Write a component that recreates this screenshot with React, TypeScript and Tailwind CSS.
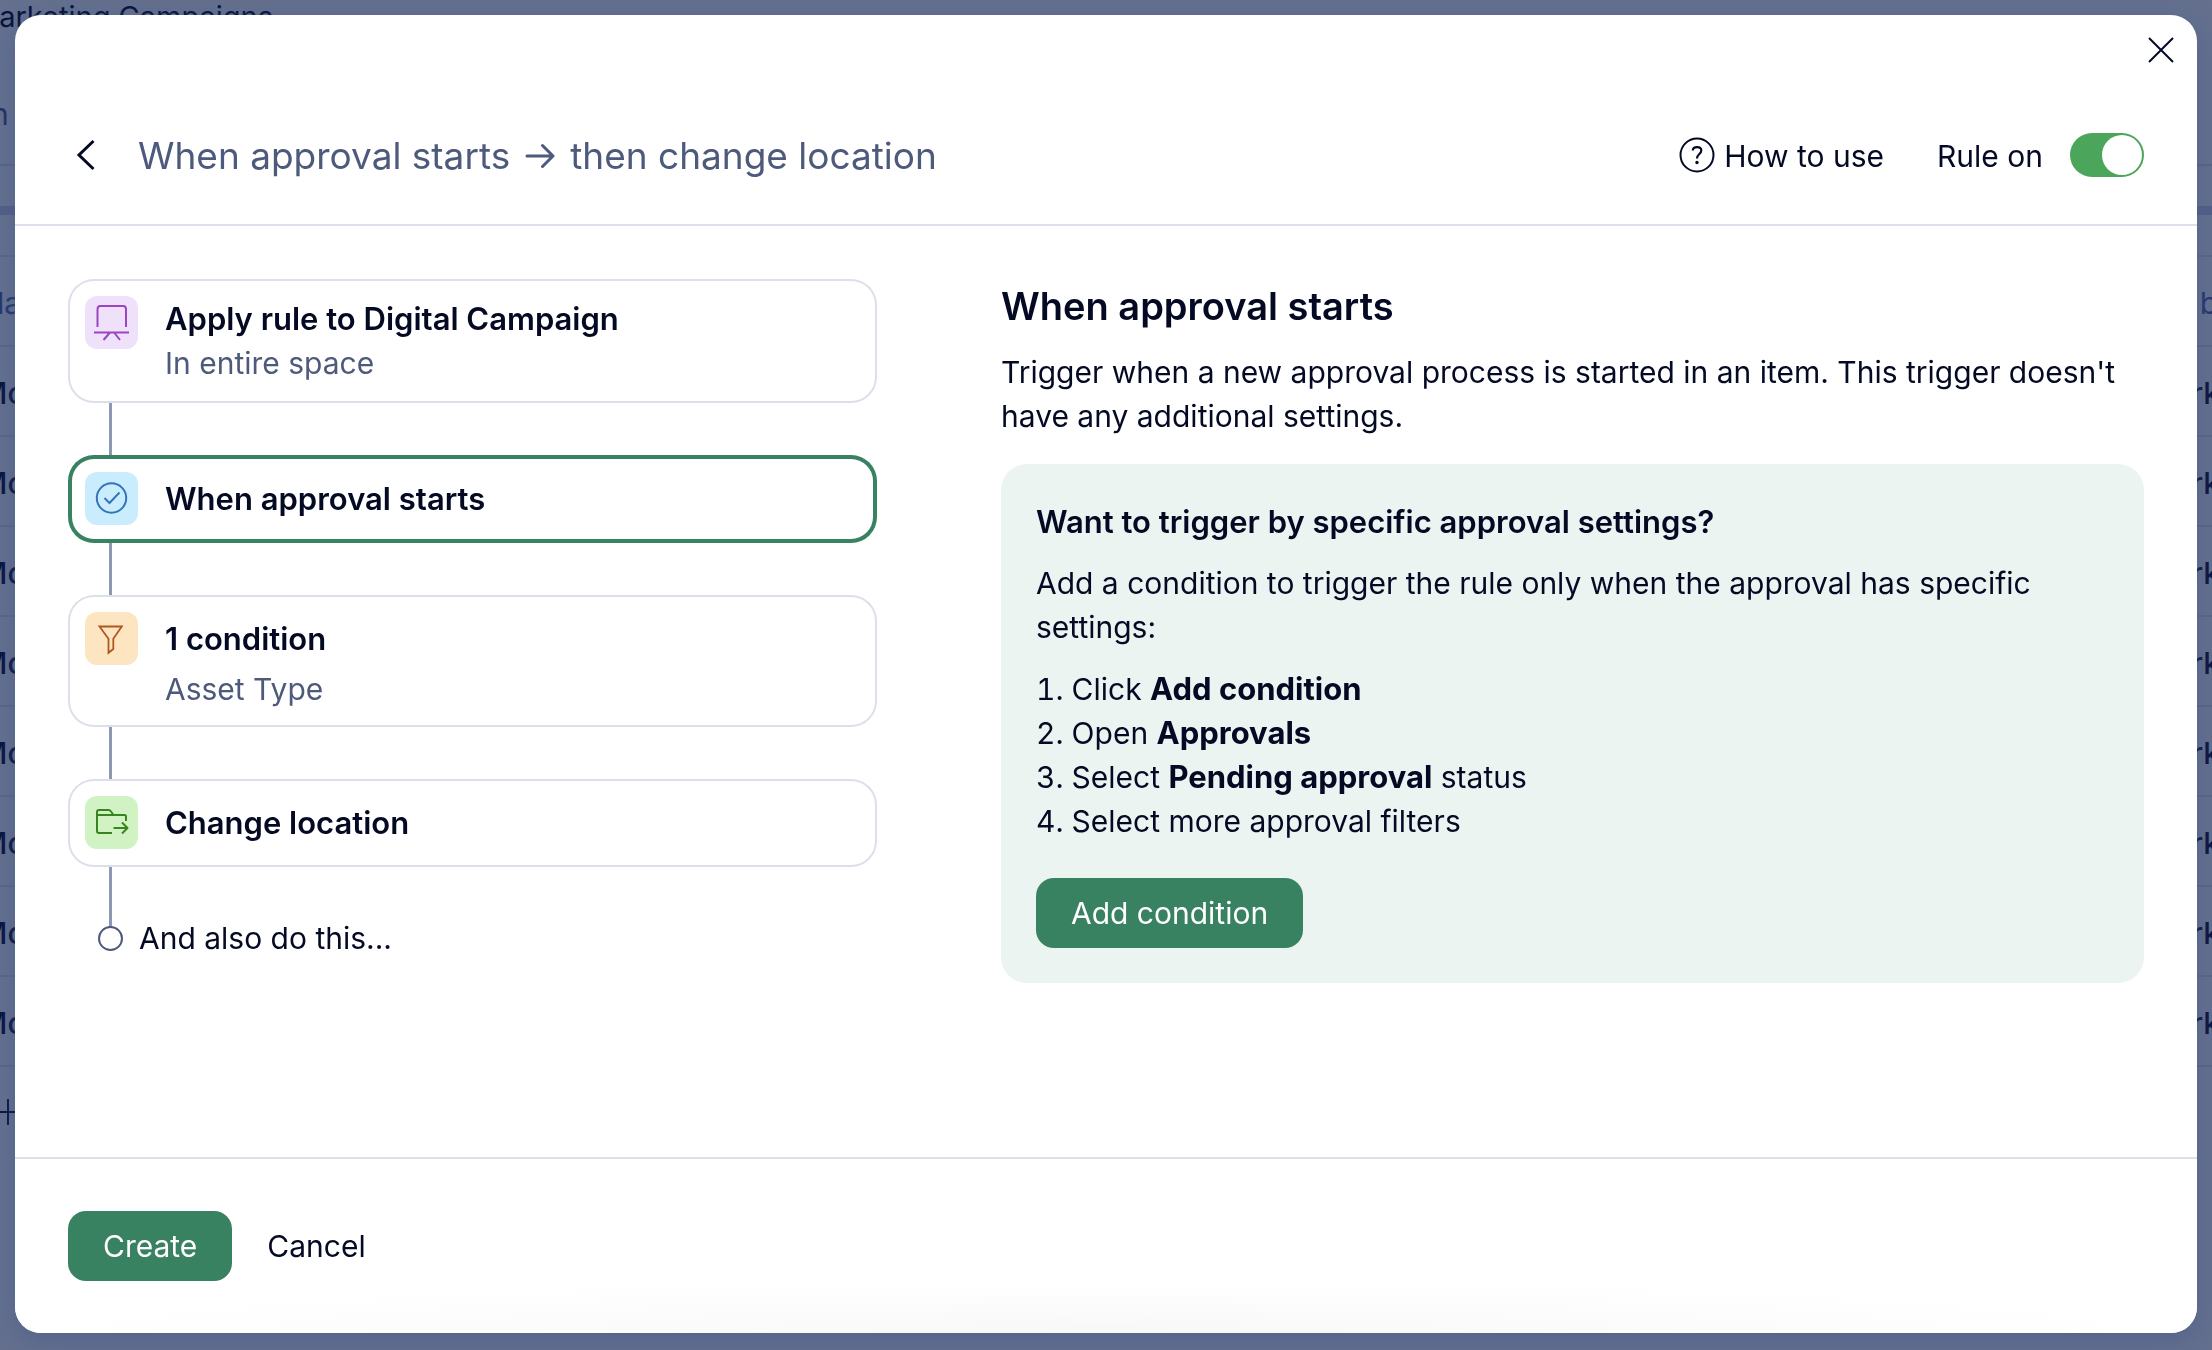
import { useState, type ReactNode } from 'react';

function Connector({ tall = false }: { tall?: boolean }) {
  return <div className={`ml-[41px] w-[3px] bg-[#8d98b3] ${tall ? 'h-[60px]' : 'h-[52px]'}`} />;
}

function BoardIcon() {
  return (
    <svg viewBox="0 0 53 53" className="size-full" fill="none" stroke="#9b45c4" strokeWidth="2" strokeLinecap="butt" aria-hidden="true">
      <path d="M12.5 31V13.5Q12.5 10 15 10H38.5Q41 10 41 13.5V31" />
      <path d="M9 36.5H44M24.500 37L18.500 44M29.500 37L35 44" />
    </svg>
  );
}

function ApprovedIcon() {
  return (
    <svg viewBox="0 0 53 53" className="size-full" fill="none" stroke="#3472bd" strokeWidth="2" aria-hidden="true">
      <circle cx="26.500" cy="26" r="14.700" />
      <path d="M19.500 26L24.500 31L34.500 20.500" />
    </svg>
  );
}

function FunnelIcon() {
  return (
    <svg viewBox="0 0 53 53" className="size-full" fill="none" stroke="#b2561f" strokeWidth="1.800" aria-hidden="true">
      <path d="M14.500 14.500H36.800L28.300 26.700V37L23.500 40.800V26.700Z" strokeLinejoin="miter" />
    </svg>
  );
}

function FolderMoveIcon() {
  return (
    <svg viewBox="0 0 53 53" className="size-full" fill="none" stroke="#38851f" strokeWidth="2" strokeLinejoin="round" aria-hidden="true">
      <path d="M27 37H14Q12 37 12 35V16Q12 14 14 14H23.500Q25 14 26 15.500L28.500 19H39.500Q41 19 41 20.500V25" />
      <path d="M12 19H29M28.500 32H42.500M37 26.500L42.500 32L37 37.500" />
    </svg>
  );
}

type StepProps = {
  title: string;
  detail?: string;
  icon: ReactNode;
  tint: string;
  selected?: boolean;
  roomy?: boolean;
};

function Step({ title, detail, icon, tint, selected = false, roomy = false }: StepProps) {
  return (
    <button
      type="button"
      className={`flex w-full items-start rounded-[26px] bg-white pl-[17px] text-left leading-[44px] ring-inset ${
        selected ? 'ring-4 ring-[#388161]' : 'ring-2 ring-[#dce0eb]'
      } ${roomy ? 'pb-[16px]' : ''}`}
    >
      <span className={`mt-[17px] size-[53px] shrink-0 overflow-hidden rounded-xl ${tint}`}>{icon}</span>
      <span className={`ml-[27px] flex flex-col ${detail ? (roomy ? 'gap-[6px] pt-[22px]' : 'py-[18px]') : 'py-[22px]'}`}>
        <span className="text-[31px] leading-[44px] font-semibold">{title}</span>
        {detail && <span className="text-[#4d5a7c]">{detail}</span>}
      </span>
    </button>
  );
}

function Backdrop() {
  const rows = [1, 2, 3, 4, 5, 6, 7, 8];
  return (
    <div className="h-screen overflow-hidden bg-[#64708e] text-[#08143f]" aria-hidden="true">
      <div className="-ml-[27px] h-[46px] pt-[1px] text-[29px] leading-[32px]">Marketing Campaigns</div>
      <div className="-ml-[9px] h-[120px] border-b-2 border-[#58658a] pt-[48px] text-[30px] leading-[40px] text-[#1f3263]">n</div>
      <div className="mt-[40px] h-[9px] bg-[#526087]" />
      <div className="h-[42px] border-b-2 border-[#5a6789]" />
      <div className="flex h-[90px] items-center justify-between border-b-2 border-[#5a6789] pt-[4px] text-[30px] text-[#23376b]">
        <span className="-ml-[3px]">la</span>
        <span className="-mr-[6px]">b</span>
      </div>
      {rows.map((row) => (
        <div key={row} className="flex h-[90px] items-center justify-between border-b-2 border-[#5a6789] pt-[4px] text-[30px] font-medium">
          <span className="-ml-[20px]">Mo</span>
          <span className="-mr-[8px]">rk</span>
        </div>
      ))}
      <div className="flex h-[90px] items-center">
        <svg viewBox="0 0 26 26" className="-ml-[5px] size-[26px]" stroke="#08143f" strokeWidth="2">
          <path d="M0 13H26M13 0V26" />
        </svg>
      </div>
    </div>
  );
}

export default function App() {
  const [ruleOn, setRuleOn] = useState(true);

  return (
    <div className="font-[Inter,'Liberation_Sans',sans-serif] text-[30px] leading-[44px] text-[#050a24]">
      <Backdrop />
      <div className="fixed inset-0 flex px-[15px] pt-[15px] pb-[17px]">
        <div
          role="dialog"
          aria-modal="true"
          aria-labelledby="rule-title"
          className="flex flex-1 flex-col overflow-hidden rounded-[26px] bg-white shadow-[0_8px_24px_rgba(70,88,140,0.5)]"
        >
          <div className="flex h-[70px] justify-end pr-[16px]">
            <button type="button" aria-label="Close" className="flex h-[69px] w-[40px] items-center justify-center">
              <svg viewBox="0 0 26 26" className="size-[26px]" stroke="currentColor" strokeWidth="2" aria-hidden="true">
                <path d="M1 1L25 25M25 1L1 25" />
              </svg>
            </button>
          </div>

          <header className="flex h-[141px] items-center border-b-2 border-[#dce0eb] px-[53px]">
            <button type="button" aria-label="Back" className="flex w-[36px] items-center justify-center">
              <svg viewBox="0 0 20 32" className="h-[32px] w-[20px]" fill="none" stroke="currentColor" strokeWidth="3" aria-hidden="true">
                <path d="M17.500 2L3 16L17.500 30" />
              </svg>
            </button>
            <h1 id="rule-title" className="ml-[34px] flex items-center pt-[2px] text-[37px] leading-[54px] text-[#4d5a7c]">
              When approval starts
              <svg viewBox="0 0 30 26" className="mx-[15px] h-[26px] w-[30px]" fill="none" stroke="currentColor" strokeWidth="3" strokeLinecap="round" strokeLinejoin="round" role="img" aria-label="then">
                <path d="M2 13H28M17.500 2.500L28 13L17.500 23.500" />
              </svg>
              then change location
            </h1>
            <a href="#how-to-use" className="ml-auto flex items-center gap-[9px]">
              <svg viewBox="0 0 36 36" className="size-[36px]" fill="none" stroke="currentColor" strokeWidth="2" aria-hidden="true">
                <circle cx="18" cy="18" r="16.500" />
                <path d="M13.800 13.500C14 9 22.300 9 22.300 13.600C22.300 17 18 17.200 18 21.500" strokeWidth="2.200" />
                <circle cx="18" cy="25.500" r="1.700" fill="currentColor" stroke="none" />
              </svg>
              <span className="pt-[2px]">How to use</span>
            </a>
            <label className="ml-[53px] flex cursor-pointer items-center gap-[27px]">
              <span className="pt-[2px]">Rule on</span>
              <input
                type="checkbox"
                role="switch"
                checked={ruleOn}
                onChange={(event) => setRuleOn(event.target.checked)}
                className="flex h-[44px] w-[74px] cursor-pointer appearance-none items-center rounded-full bg-[#8d98b3] p-[2px] before:size-[40px] before:rounded-full before:bg-white checked:justify-end checked:bg-[#4ba65c]"
              />
            </label>
          </header>

          <main className="grid flex-1 grid-cols-[809fr_1143fr] gap-[124px] px-[53px] pt-[53px]">
            <section aria-label="Rule steps">
              <Step title="Apply rule to Digital Campaign" detail="In entire space" icon={<BoardIcon />} tint="bg-[#f0e1fa]" />
              <Connector />
              <Step title="When approval starts" icon={<ApprovedIcon />} tint="bg-[#caedfd]" selected />
              <Connector />
              <Step title="1 condition" detail="Asset Type" icon={<FunnelIcon />} tint="bg-[#fce5c0]" roomy />
              <Connector />
              <Step title="Change location" icon={<FolderMoveIcon />} tint="bg-[#d1f2c3]" />
              <Connector tall />
              <button type="button" className="-mt-[11px] flex items-center pl-[30px]">
                <span className="size-[25px] rounded-full border-2 border-[#4d5a7c]" />
                <span className="ml-[16px]">And also do this...</span>
              </button>
            </section>

            <section aria-labelledby="trigger-title">
              <h2 id="trigger-title" className="text-[38px] leading-[54px] font-semibold">When approval starts</h2>
              <p className="mt-[17px]">
                Trigger when a new approval process is started in an item. This trigger doesn't have any additional settings.
              </p>
              <div className="mt-[26px] rounded-[26px] bg-[#ebf4f1] px-[35px] pt-[36px] pb-[35px]">
                <h3 className="text-[31px] leading-[44px] font-semibold">Want to trigger by specific approval settings?</h3>
                <p className="mt-[17px]">Add a condition to trigger the rule only when the approval has specific settings:</p>
                <ol className="mt-[18px] list-inside list-decimal">
                  <li>Click <b className="text-[31px] font-bold">Add condition</b></li>
                  <li>Open <b className="text-[31px] font-bold">Approvals</b></li>
                  <li>Select <b className="text-[31px] font-bold">Pending approval</b> status</li>
                  <li>Select more approval filters</li>
                </ol>
                <button type="button" className="mt-[35px] h-[70px] rounded-[18px] bg-[#388161] px-[35px] text-white">Add condition</button>
              </div>
            </section>
          </main>

          <footer className="flex h-[176px] items-center gap-[35px] border-t-2 border-[#dce0eb] bg-[radial-gradient(ellipse_50%_30%_at_50%_100%,#f8f8f8,#ffffff)] px-[53px]">
            <button type="button" className="h-[70px] rounded-[18px] bg-[#388161] px-[35px] text-white">Create</button>
            <button type="button">Cancel</button>
          </footer>
        </div>
      </div>
    </div>
  );
}
